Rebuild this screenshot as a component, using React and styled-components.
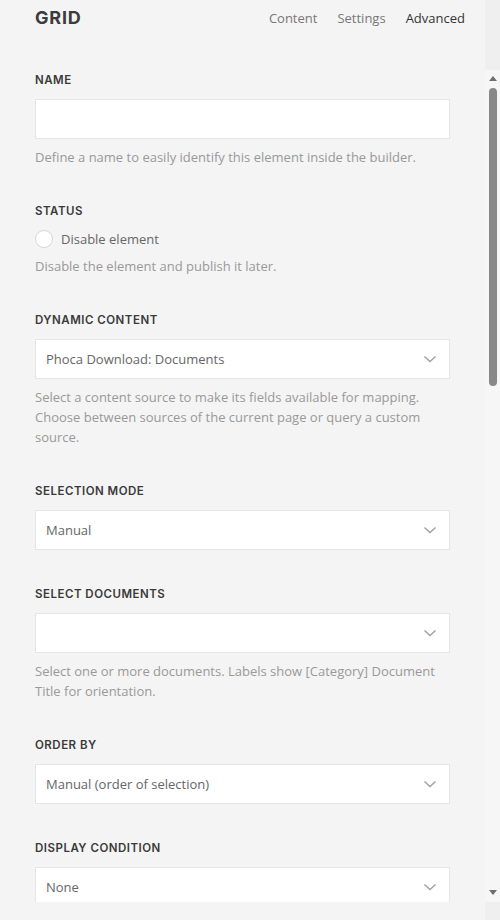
import React from "react";
import styled, { createGlobalStyle } from "styled-components";

const GlobalStyle = createGlobalStyle`
  html, body {
    margin: 0;
    padding: 0;
    background: #f4f4f4;
  }
  * { box-sizing: border-box; }
`;

const fields = [
  {
    label: "Name",
    type: "input",
    help: "Define a name to easily identify this element inside the builder.",
  },
  {
    label: "Status",
    type: "radio",
    option: "Disable element",
    help: "Disable the element and publish it later.",
  },
  {
    label: "Dynamic Content",
    type: "select",
    value: "Phoca Download: Documents",
    help: "Select a content source to make its fields available for mapping. Choose between sources of the current page or query a custom source.",
  },
  { label: "Selection Mode", type: "select", value: "Manual" },
  {
    label: "Select Documents",
    type: "select",
    value: "",
    help: "Select one or more documents. Labels show [Category] Document Title for orientation.",
  },
  { label: "Order By", type: "select", value: "Manual (order of selection)" },
  { label: "Display Condition", type: "select", value: "None" },
];

const Chevron = () => (
  <svg width="14" height="14" viewBox="0 0 14 14" fill="none">
    <polyline points="1.5,4.5 7,9.5 12.5,4.5" stroke="#a0a0a0" strokeWidth="1.4" />
  </svg>
);

const App = () => {
  return (
    <>
      <GlobalStyle />
      <Page>
        <Panel>
          <Header>
            <Title>Grid</Title>
            <Tabs>
              <Tab>Content</Tab>
              <Tab>Settings</Tab>
              <Tab active>Advanced</Tab>
            </Tabs>
          </Header>
          <Body>
            <Form>
              {fields.map((f) => (
                <Field key={f.label}>
                  <Label>{f.label}</Label>
                  {f.type === "input" && <TextInput />}
                  {f.type === "radio" && (
                    <RadioRow>
                      <RadioCircle />
                      <RadioText>{f.option}</RadioText>
                    </RadioRow>
                  )}
                  {f.type === "select" && (
                    <SelectBox>
                      <SelectValue>{f.value}</SelectValue>
                      <Chevron />
                    </SelectBox>
                  )}
                  {f.help && <Help>{f.help}</Help>}
                </Field>
              ))}
            </Form>
          </Body>
        </Panel>
        <Rail>
          <RailSpacer />
          <Track>
            <Arrow />
            <Thumb />
            <TrackFill />
            <Arrow down />
          </Track>
        </Rail>
      </Page>
    </>
  );
};
export default App;

const Page = styled.div`
  display: flex;
  width: 500px;
  height: 920px;
  overflow: hidden;
  background: #f4f4f4;
  font-family: "Open Sans", "Liberation Sans", sans-serif;
`;

const Panel = styled.div`
  width: 485px;
  display: flex;
  flex-direction: column;
`;

const Header = styled.div`
  height: 70px;
  flex-shrink: 0;
  display: flex;
  justify-content: space-between;
  align-items: flex-start;
  padding: 0 20px 0 35px;
`;

const Title = styled.div`
  font-family: "Inter", "Liberation Sans", sans-serif;
  font-weight: 700;
  font-size: 18px;
  line-height: 36px;
  letter-spacing: 0.8px;
  text-transform: uppercase;
  color: #3c3c3c;
`;

const Tabs = styled.div`
  display: flex;
  gap: 20px;
`;

const Tab = styled.div`
  font-size: 13px;
  line-height: 36px;
  color: ${(p) => (p.active ? "#333" : "#777")};
`;

const Body = styled.div`
  height: 832px;
  flex-shrink: 0;
  overflow: hidden;
`;

const Form = styled.div`
  padding: 2px 35px 0 35px;
  display: flex;
  flex-direction: column;
  gap: 36px;
`;

const Field = styled.div`
  display: flex;
  flex-direction: column;
`;

const Label = styled.div`
  font-family: "Inter", "Liberation Sans", sans-serif;
  font-weight: 600;
  font-size: 11.5px;
  line-height: 16px;
  letter-spacing: 0.5px;
  text-transform: uppercase;
  color: #3a3a3a;
  margin-bottom: 11px;
`;

const TextInput = styled.div`
  height: 40px;
  background: #fff;
  border: 1px solid #e5e5e5;
`;

const SelectBox = styled.div`
  height: 40px;
  background: #fff;
  border: 1px solid #e5e5e5;
  display: flex;
  align-items: center;
  justify-content: space-between;
  padding: 0 12px 0 10px;
`;

const SelectValue = styled.span`
  font-size: 13px;
  color: #666;
`;

const RadioRow = styled.div`
  display: flex;
  align-items: center;
  height: 18px;
  gap: 8px;
`;

const RadioCircle = styled.span`
  width: 18px;
  height: 18px;
  border-radius: 50%;
  border: 1px solid #d5d5d5;
  background: #fff;
`;

const RadioText = styled.span`
  font-size: 13px;
  color: #666;
`;

const Help = styled.div`
  margin-top: 8px;
  font-size: 13px;
  line-height: 20px;
  color: #999;
`;

const Rail = styled.div`
  width: 15px;
  display: flex;
  flex-direction: column;
  background: #efefef;
`;

const RailSpacer = styled.div`
  height: 70px;
  flex-shrink: 0;
`;

const Track = styled.div`
  height: 832px;
  flex-shrink: 0;
  background: #f6f6f6;
  display: flex;
  flex-direction: column;
  align-items: center;
  padding: 5px 0 6px 0;
`;

const Arrow = styled.div`
  width: 0;
  height: 0;
  border-left: 4.5px solid transparent;
  border-right: 4.5px solid transparent;
  ${(p) =>
    p.down ? "border-top: 5px solid #6e6e6e;" : "border-bottom: 5px solid #6e6e6e;"}
  margin: 1px 0;
`;

const Thumb = styled.div`
  width: 8px;
  height: 298px;
  margin-top: 6px;
  border-radius: 4px;
  background: #888;
`;

const TrackFill = styled.div`
  flex: 1;
`;
